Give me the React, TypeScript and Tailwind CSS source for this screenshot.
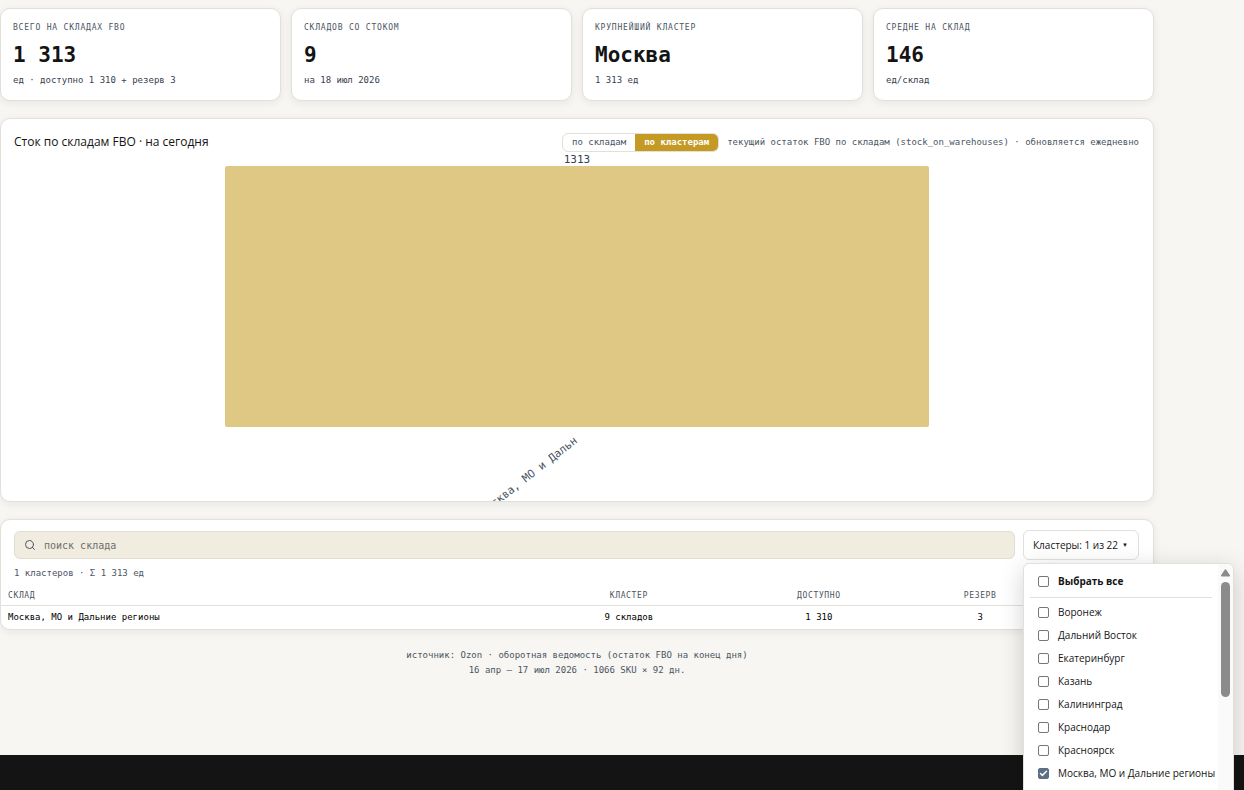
import { useState } from "react";
import { Check, Search } from "lucide-react";

const stats = [
  { label: "Всего на складах FBO", value: "1 313", note: "ед · доступно 1 310 + резерв 3" },
  { label: "Складов со стоком", value: "9", note: "на 18 июл 2026" },
  { label: "Крупнейший кластер", value: "Москва", note: "1 313 ед" },
  { label: "Средне на склад", value: "146", note: "ед/склад" },
];

const clusters = [
  "Воронеж",
  "Дальний Восток",
  "Екатеринбург",
  "Казань",
  "Калининград",
  "Краснодар",
  "Красноярск",
  "Москва, МО и Дальние регионы",
];

const rows = [
  { name: "Москва, МО и Дальние регионы", cluster: "9 складов", available: "1 310", reserved: "3" },
];

const card = "rounded-[10px] border border-[#e1e0da] bg-white shadow-[0_2px_8px_rgba(40,35,20,0.07)]";

function StatCard({ label, value, note }: { label: string; value: string; note: string }) {
  return (
    <div className={`${card} px-3 pt-[13px] pb-3`}>
      <div className="text-[8px] leading-3 tracking-[0.1em] text-[#4b5563] uppercase">{label}</div>
      <div className="mt-[7px] text-[21px] leading-7 font-bold text-[#141414]">{value}</div>
      <div className="mt-[3px] text-[9px] leading-4 text-[#374151]">{note}</div>
    </div>
  );
}

function StockChart() {
  return (
    <svg viewBox="0 0 1152 347" className="block w-full" role="img" aria-label="Сток по кластерам">
      <text x="576" y="9" textAnchor="middle" fontSize="11" fill="#374151">
        1313
      </text>
      <rect x="224" y="12" width="704" height="261" rx="2" fill="#dfc883" />
      <text x="577" y="288" textAnchor="end" fontSize="11" fill="#4b5563" transform="rotate(-38 577 288)">
        Москва, МО и Дальн
      </text>
    </svg>
  );
}

type OptionProps = {
  label: string;
  checked: boolean;
  bold?: boolean;
  onChange: () => void;
};

function Option({ label, checked, bold, onChange }: OptionProps) {
  return (
    <label className="flex h-[23px] items-center gap-[9px] pl-2 text-[10px] whitespace-nowrap text-[#141414]">
      <span className="relative size-[11px] shrink-0">
        <input
          type="checkbox"
          checked={checked}
          onChange={onChange}
          className="peer block size-[11px] appearance-none rounded-[2px] border border-[#767676] bg-white checked:border-[#5b7083] checked:bg-[#5b7083]"
        />
        <Check
          strokeWidth={4}
          className="pointer-events-none absolute inset-0 hidden size-[11px] p-px text-white peer-checked:block"
        />
      </span>
      <span className={bold ? "font-bold" : ""}>{label}</span>
    </label>
  );
}

function ClusterMenu() {
  const [selected, setSelected] = useState<string[]>(["Москва, МО и Дальние регионы"]);
  const allSelected = selected.length === clusters.length;

  const toggle = (name: string) =>
    setSelected((prev) => (prev.includes(name) ? prev.filter((n) => n !== name) : [...prev, name]));

  return (
    <div className="absolute top-full left-0 z-10 mt-[3px] flex w-[211px] rounded-[6px] border border-[#e1e0da] bg-white shadow-[0_6px_24px_rgba(0,0,0,0.18)]">
      <div className="w-[194px] px-[6px] pt-[6px] pb-8">
        <Option
          bold
          label="Выбрать все"
          checked={allSelected}
          onChange={() => setSelected(allSelected ? [] : clusters)}
        />
        <div className="mt-1 mb-[3px] border-b border-[#e1e0da]" />
        {clusters.map((name) => (
          <Option key={name} label={name} checked={selected.includes(name)} onChange={() => toggle(name)} />
        ))}
      </div>
      <div className="flex w-[15px] shrink-0 flex-col items-center rounded-r-[6px] bg-[#fafafa] pt-[5px]">
        <svg viewBox="0 0 9 8" className="h-2 w-[9px]" fill="#8b8b8b">
          <path d="M3.7.8a1 1 0 0 1 1.6 0L8.8 6a1 1 0 0 1-.8 1.6H1A1 1 0 0 1 .2 6z" />
        </svg>
        <div className="mt-[5px] h-[115px] w-[9px] rounded-full bg-[#8b8b8b]" />
      </div>
    </div>
  );
}

export default function App() {
  const [view, setView] = useState("clusters");
  const [search, setSearch] = useState("");
  const [menuOpen, setMenuOpen] = useState(true);

  return (
    <div className="flex h-screen flex-col overflow-hidden bg-[#f7f6f2] font-['DejaVu_Sans_Mono',monospace]">
      <main className="mr-[90px] pt-2 pb-[77px]">
        <section className="grid grid-cols-4 gap-[10px]">
          {stats.map((s) => (
            <StatCard key={s.label} {...s} />
          ))}
        </section>

        <section className={`${card} mt-[17px]`}>
          <div className="flex items-center justify-between pt-[13px] pr-[14px] pb-[2px] pl-[13px]">
            <h2 className="font-['Open_Sans',sans-serif] text-[12px] leading-5 text-[#141414]">
              Сток по складам FBO · на сегодня
            </h2>
            <div className="flex items-center gap-2">
              <div className="flex h-[19px] overflow-hidden rounded-[6px] border border-[#e1e0da] text-[9px]">
                <button
                  onClick={() => setView("warehouses")}
                  className={`px-[9px] pt-px ${view === "warehouses" ? "bg-[#c49a25] font-bold text-white" : "text-[#4b5563]"}`}
                >
                  по складам
                </button>
                <button
                  onClick={() => setView("clusters")}
                  className={`px-[9px] pt-px ${view === "clusters" ? "bg-[#c49a25] font-bold text-white" : "text-[#4b5563]"}`}
                >
                  по кластерам
                </button>
              </div>
              <span className="text-[9px] leading-4 text-[#4b5563]">
                текущий остаток FBO по складам (stock_on_warehouses) · обновляется ежедневно
              </span>
            </div>
          </div>
          <StockChart />
        </section>

        <section className={`${card} mt-[17px]`}>
          <div className="flex items-center gap-2 pt-[10px] pr-[14px] pl-[13px]">
            <label className="flex h-7 flex-1 items-center gap-2 rounded-[6px] border border-[#e1ddcf] bg-[#f0ece0] px-[9px]">
              <Search className="size-3 text-[#4b5563]" strokeWidth={2} />
              <input
                value={search}
                onChange={(e) => setSearch(e.target.value)}
                placeholder="поиск склада"
                aria-label="поиск склада"
                className="flex-1 bg-transparent text-[10px] outline-none placeholder:text-[#6f6f6b]"
              />
            </label>
            <div className="relative font-['Open_Sans',sans-serif]">
              <button
                onClick={() => setMenuOpen(!menuOpen)}
                className="flex h-[30px] w-[116px] items-center gap-1 rounded-[6px] border border-[#e1e0da] bg-white px-[9px] text-[10px] whitespace-nowrap text-[#141414]"
              >
                Кластеры: 1 из 22
                <span className="text-[6px]">▼</span>
              </button>
              {menuOpen && <ClusterMenu />}
            </div>
          </div>

          <div className="px-[13px] pt-[5px] text-[9px] leading-4 text-[#4b5563]">1 кластеров · Σ 1 313 ед</div>

          <table className="mt-1 w-full table-fixed text-center text-[9px] leading-3">
            <thead>
              <tr className="border-b border-[#e1e0da] text-[8px] tracking-[0.08em] text-[#4b5563] uppercase">
                <th className="w-[46%] pt-[5px] pb-[3px] pl-[7px] text-left font-normal">Склад</th>
                <th className="w-[17%] pt-[5px] pb-[3px] font-normal">Кластер</th>
                <th className="w-[16%] pt-[5px] pb-[3px] font-normal">Доступно</th>
                <th className="w-[12%] pt-[5px] pb-[3px] font-normal">Резерв</th>
                <td className="w-[9%]" />
              </tr>
            </thead>
            <tbody>
              {rows.map((r) => (
                <tr key={r.name} className="h-[23px] text-black">
                  <td className="pl-[7px] text-left">{r.name}</td>
                  <td>{r.cluster}</td>
                  <td>{r.available}</td>
                  <td>{r.reserved}</td>
                  <td />
                </tr>
              ))}
            </tbody>
          </table>
        </section>

        <footer className="mt-[18px] text-center text-[9px] leading-[15px] text-[#4b5563]">
          <p>источник: Ozon · оборотная ведомость (остаток FBO на конец дня)</p>
          <p>16 апр — 17 июл 2026 · 1066 SKU × 92 дн.</p>
        </footer>
      </main>
      <div className="flex-1 bg-[#141414]" />
    </div>
  );
}
